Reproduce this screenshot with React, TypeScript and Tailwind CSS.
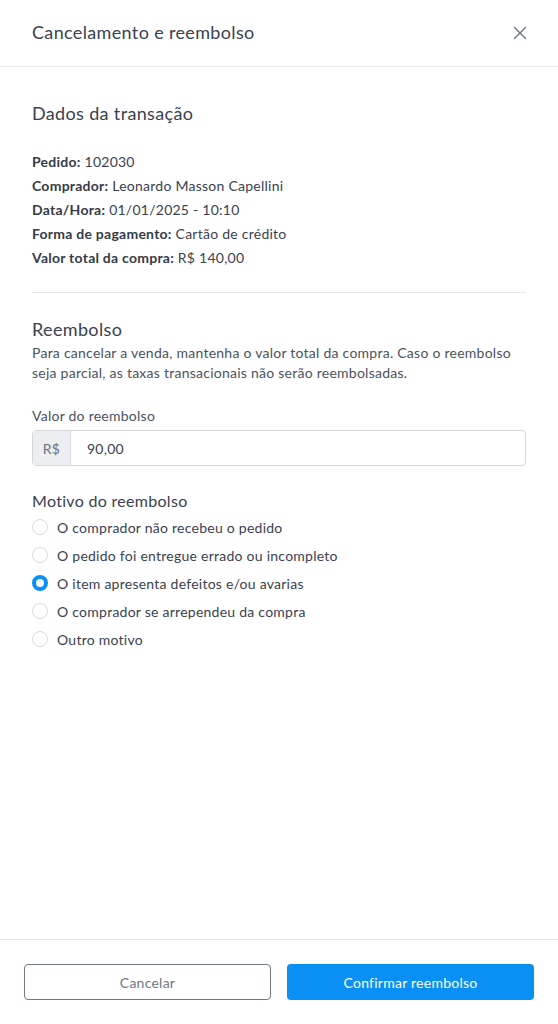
import { useState } from "react";

const motivos = [
  "O comprador não recebeu o pedido",
  "O pedido foi entregue errado ou incompleto",
  "O item apresenta defeitos e/ou avarias",
  "O comprador se arrependeu da compra",
  "Outro motivo",
];

const dados: [string, string][] = [
  ["Pedido:", "102030"],
  ["Comprador:", "Leonardo Masson Capellini"],
  ["Data/Hora:", "01/01/2025 - 10:10"],
  ["Forma de pagamento:", "Cartão de crédito"],
  ["Valor total da compra:", "R$ 140,00"],
];

export default function App() {
  const [motivo, setMotivo] = useState(2);

  return (
    <div className="min-h-screen flex flex-col bg-white text-[#3a4150] tracking-[0.25px] font-['Lato','Open_Sans',sans-serif]">
      <header className="h-[67px] px-8 flex items-center justify-between border-b border-[#e6e8eb]">
        <h2 className="text-[18px] leading-7 -mt-[2px] tracking-[0.35px]">Cancelamento e reembolso</h2>
        <button className="text-[#6b7280] -mr-[2px]">
          <svg width="16" height="16" viewBox="0 0 16 16" fill="none" stroke="currentColor" strokeWidth="1.4" strokeLinecap="round">
            <path d="M2.5 2.5l11 11M13.5 2.5l-11 11" />
          </svg>
        </button>
      </header>

      <main className="flex-1 px-8 pt-8">
        <h3 className="text-[18px] leading-7 tracking-[0.35px]">Dados da transação</h3>
        <div className="mt-[23px] text-[14px] leading-6">
          {dados.map(([k, v]) => (
            <p key={k}>
              <strong className="font-bold text-[#353b48]">{k}</strong> {v}
            </p>
          ))}
        </div>

        <hr className="mt-[22px] border-[#e6e8eb]" />

        <h3 className="mt-[22px] text-[18px] leading-7 tracking-[0.35px]">Reembolso</h3>
        <p className="text-[14px] leading-5 text-[#4b5260]">
          Para cancelar a venda, mantenha o valor total da compra. Caso o reembolso seja parcial, as
          taxas transacionais não serão reembolsadas.
        </p>

        <label className="block mt-[23px] text-[14px] leading-5 text-[#4b5260]">Valor do reembolso</label>
        <div className="mt-1 flex h-9 rounded border border-[#d4d7dc] overflow-hidden">
          <span className="w-[38px] flex items-center justify-center bg-[#eceef1] border-r border-[#d4d7dc] text-[14px] text-[#6b7280]">
            R$
          </span>
          <input
            className="flex-1 px-4 text-[14px] tracking-[0.25px] text-[#3a4150] outline-none"
            defaultValue="90,00"
          />
        </div>

        <h4 className="mt-[23px] text-[16px] leading-6 tracking-[0.3px]">Motivo do reembolso</h4>
        <div>
          {motivos.map((m, i) => (
            <label key={m} className="h-7 flex items-center gap-[9px] text-[14px] cursor-pointer">
              <input
                type="radio"
                name="motivo"
                checked={motivo === i}
                onChange={() => setMotivo(i)}
                className="sr-only"
              />
              <span
                className={
                  motivo === i
                    ? "w-4 h-4 rounded-full border-[4px] border-[#0a8ff5] bg-white"
                    : "w-4 h-4 rounded-full border border-[#d6d9de] bg-white"
                }
              />
              {m}
            </label>
          ))}
        </div>
      </main>

      <footer className="border-t border-[#e6e8eb] px-6 pt-6 pb-6 grid grid-cols-2 gap-4">
        <button className="h-9 rounded border border-[#707785] text-[14px] text-[#707785]">Cancelar</button>
        <button className="h-9 rounded bg-[#0a8ff5] text-[14px] text-white">Confirmar reembolso</button>
      </footer>
    </div>
  );
}
